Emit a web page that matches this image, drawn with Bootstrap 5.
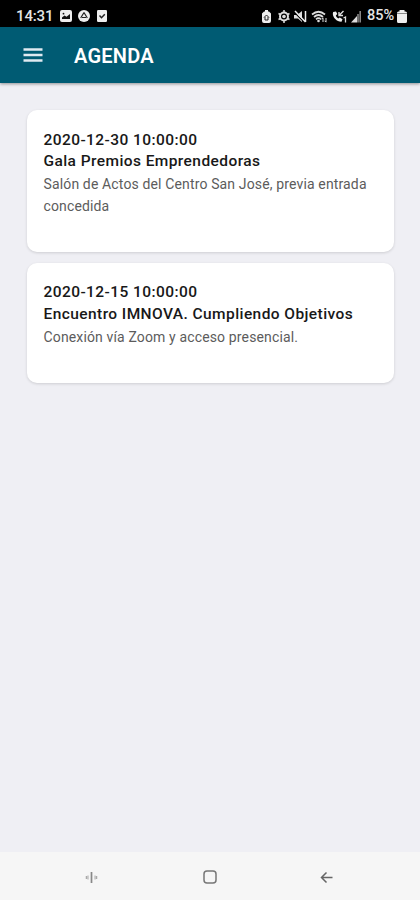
<!DOCTYPE html>
<html lang="es">
<head>
<meta charset="utf-8">
<meta name="viewport" content="width=device-width, initial-scale=1">
<title>Agenda</title>
<link href="https://cdn.jsdelivr.net/npm/bootstrap@5.3.0/dist/css/bootstrap.min.css" rel="stylesheet">
<style>
body{font-family:Roboto,sans-serif;background:#efeff4;height:900px;overflow:hidden}
svg{display:block;flex:none}
.statusbar{height:27px;background:#000;color:#e4e4e4;padding:5px 13px 0 16px}
.status-left{gap:6.5px}
.status-right{gap:4px}
.clock{font-size:15px;font-weight:500;line-height:22px;width:37px;letter-spacing:-.15px;white-space:nowrap}
.percent{font-size:14.5px;font-weight:500;line-height:22px;width:29px;margin:0 1px 0 2px;white-space:nowrap}
.appbar{height:56px;background:#005b73;padding:0 23px;box-shadow:0 1px 3px rgba(0,0,0,.4)}
.appbar h1{font-size:20px;font-weight:600;line-height:24px;margin-left:31px;padding-top:1px;letter-spacing:.25px}
.agenda{padding:27px 26px 0 27px;gap:11px}
.event{border-radius:10px;padding:18px 16.5px 0;box-shadow:0 1px 3px rgba(0,0,0,.14)}
.event h2{font-size:15.5px;font-weight:500;line-height:22px;letter-spacing:.42px;color:#181818;white-space:nowrap}
.event p{font-size:14px;line-height:21.5px;color:#5c5c5c;letter-spacing:.14px;padding-top:2px}
.event-tall{height:142px}
.event-tall h2:first-child{padding-top:2px;line-height:20px}
.event-short{height:120px}
.sysnav{height:48px;background:#f6f6f6;padding:2px 87px 0 84px}
</style>
<script src="https://cdn.jsdelivr.net/npm/bootstrap@5.3.0/dist/js/bootstrap.bundle.min.js"></script>
</head>
<body class="d-flex flex-column m-0">
<div class="statusbar d-flex align-items-center justify-content-between">
  <div class="status-left d-flex align-items-center">
    <span class="clock">14:31</span>
    <svg width="12" height="12" viewBox="0 0 12 12"><rect width="12" height="12" rx="2" fill="#eee"/><path d="M2 9V7.500L4.500 5.500l2 1.300L10 4v5z" fill="#111"/><circle cx="3.500" cy="3.700" r=".9" fill="#111"/></svg>
    <svg width="12" height="12" viewBox="0 0 12 12"><circle cx="6" cy="6" r="6" fill="#eee"/><path d="M6 2.500 9.300 8M6 2.500 2.700 8M4 7.500h4" fill="none" stroke="#222" stroke-width="1.200"/></svg>
    <svg width="10" height="12" viewBox="0 0 10 12"><rect width="10" height="12" rx="1.200" fill="#eee"/><path d="m2.500 5.500 2 2.200 3.300-3.500" fill="none" stroke="#222" stroke-width="1.500"/></svg>
  </div>
  <div class="status-right d-flex align-items-center">
    <svg width="11" height="13" viewBox="0 0 11 13"><path d="M3 1.500h1V0h3v1.500h1l2 2V11a2 2 0 0 1-2 2H3a2 2 0 0 1-2-2V3.500z" fill="#eee"/><path d="M3 7.500 5.500 5 8 7.500M4 7v3h3V7" fill="none" stroke="#222"/></svg>
    <svg width="14" height="13" viewBox="-1.500 0 14 13"><circle cx="6.500" cy="6.500" r="4" fill="none" stroke="#ddd" stroke-width="2"/><circle cx="6.500" cy="6.500" r="1.800" fill="#ddd"/><path d="M6.500 0v3M6.500 10v3M1 3.500l2 1M10 8.500l2 1M1 9.500l2-1M10 4.500l2-1" stroke="#ddd" stroke-width="1.500"/></svg>
    <svg width="13" height="13" viewBox="0 0 13 13"><path d="M0 5h3l5-4v11L4 8.500H0z" fill="#ddd"/><path d="m0 2 10 10" stroke="#000" stroke-width="1.200"/><path d="m1 1 10.500 11M11.500 1v11" stroke="#eee" stroke-width="1.500"/></svg>
    <svg width="17" height="13" viewBox="0 0 17 13"><path d="M1 4.500q6.500-5.500 13 0M3 7q4.500-4 9 0M5 9.300q2.500-2.200 5 0" fill="none" stroke="#ddd" stroke-width="1.700"/><circle cx="7.500" cy="11" r="1.300" fill="#ddd"/><path d="M12 12V8m-1.300 1.200L12 7.800M15 8v4m-1.300-1.200L15 12.200" stroke="#ddd" fill="none"/></svg>
    <svg width="15" height="13" viewBox="0 0 15 13"><path d="M1.200 2C-.5 6 4 12 9.500 11.800l1-2.600-2.700-1.700-1.600 1Q4 7 3.800 5.500L5.300 4 4 1.500z" fill="#eee"/><path d="M7 2v3.500h4M7 5.500 11.500 1" fill="none" stroke="#ddd" stroke-width="1.400"/><path d="m11.500 8 2-1v5.500" stroke="#ddd" fill="none" stroke-width="1.300"/></svg>
    <svg width="10" height="13" viewBox="0 0 10 13"><path d="M0 12.500 6 6v6.500z" fill="#ddd"/><path d="M7 12.500V4M9.200 12.500V1" stroke="#888" stroke-width="1.600"/></svg>
    <div class="d-flex align-items-center">
      <span class="percent">85%</span>
      <svg width="10" height="13" viewBox="0 0 10 13"><path d="M2.500 1.500V0h5v1.500h1A1.500 1.500 0 0 1 10 3v8.500A1.500 1.500 0 0 1 8.500 13h-7A1.500 1.500 0 0 1 0 11.500V3a1.500 1.500 0 0 1 1.500-1.500z" fill="#eee"/><path d="M0 3.500h10" stroke="#888"/></svg>
    </div>
  </div>
</div>
<header class="appbar d-flex align-items-center text-white">
  <svg width="20" height="14" viewBox="0 0 20 14" role="img" aria-label="Menú"><path d="M.5 1.500h19M.5 7h19M.5 12.500h19" stroke="#dfeaf1" stroke-width="2.600"/></svg>
  <h1 class="mb-0">AGENDA</h1>
</header>
<main class="agenda d-flex flex-column flex-grow-1">
  <article class="event event-tall bg-white">
    <h2 class="mb-0">2020-12-30 10:00:00</h2>
    <h2 class="mb-0">Gala Premios Emprendedoras</h2>
    <p class="mb-0">Salón de Actos del Centro San José, previa entrada concedida</p>
  </article>
  <article class="event event-short bg-white">
    <h2 class="mb-0">2020-12-15 10:00:00</h2>
    <h2 class="mb-0">Encuentro IMNOVA. Cumpliendo Objetivos</h2>
    <p class="mb-0">Conexión vía Zoom y acceso presencial.</p>
  </article>
</main>
<nav class="sysnav d-flex align-items-center justify-content-between">
  <svg width="15" height="13" viewBox="0 0 15 13"><path d="M7.500 1v11" stroke="#888" stroke-width="1.700"/><path d="M2.500 5v3M12.500 5v3" stroke="#aaa" stroke-width="1.500"/><path d="M4 4.500v4M11 4.500v4" stroke="#999" stroke-width=".8"/></svg>
  <svg width="14" height="14" viewBox="0 0 14 14"><rect x="1" y="1" width="12" height="12" rx="3" fill="none" stroke="#777" stroke-width="1.500"/></svg>
  <svg width="13" height="13" viewBox="0 0 13 13"><path d="M6.500 1.500 1.500 6.500l5 5M1.500 6.500h11" fill="none" stroke="#666" stroke-width="1.500"/></svg>
</nav>
</body>
</html>
